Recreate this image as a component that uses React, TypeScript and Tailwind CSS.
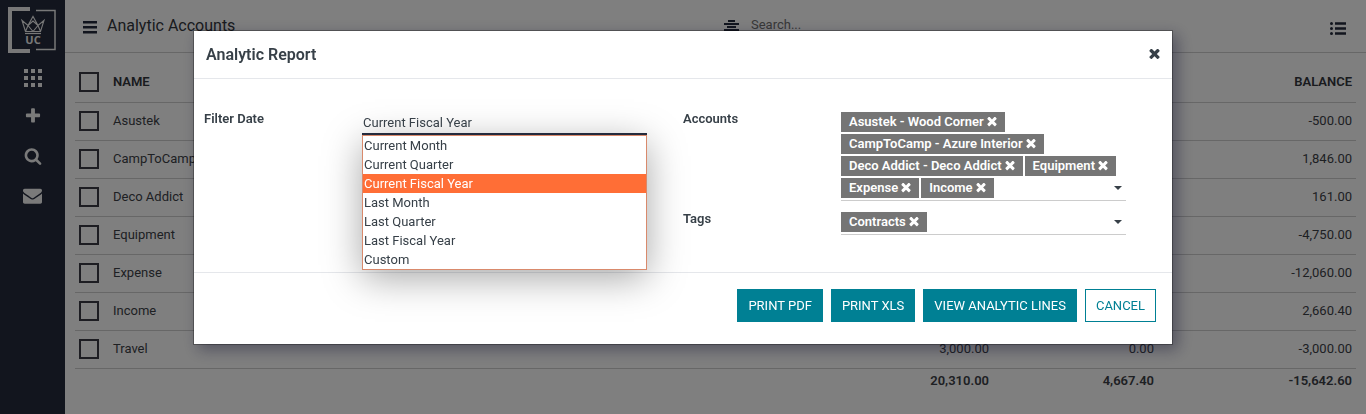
import React from "react";

type IconProps = { d: string; className?: string; viewBox?: string };

function Icon({ d, className, viewBox = "0 0 1792 1792" }: IconProps) {
  return (
    <svg viewBox={viewBox} className={className} fill="currentColor" aria-hidden="true">
      <path d={d} />
    </svg>
  );
}

const TIMES =
  "M1490 1322q0 40-28 68l-136 136q-28 28-68 28t-68-28l-294-294-294 294q-28 28-68 28t-68-28l-136-136q-28-28-28-68t28-68l294-294-294-294q-28-28-28-68t28-68l136-136q28-28 68-28t68 28l294 294 294-294q28-28 68-28t68 28l136 136q28 28 28 68t-28 68l-294 294 294 294q28 28 28 68z";
const SEARCH =
  "M1216 832q0-185-131.5-316.5t-316.5-131.5-316.5 131.5-131.5 316.5 131.5 316.5 316.5 131.5 316.5-131.5 131.5-316.5zm512 832q0 52-38 90t-90 38q-54 0-90-38l-343-342q-179 124-399 124-143 0-273.5-55.5t-225-150-150-225-55.5-273.5 55.5-273.5 150-225 225-150 273.5-55.5 273.5 55.5 225 150 150 225 55.5 273.5q0 220-124 399l343 343q37 37 37 90z";
const PLUS =
  "M1600 736v192q0 40-28 68t-68 28h-416v416q0 40-28 68t-68 28h-192q-40 0-68-28t-28-68v-416h-416q-40 0-68-28t-28-68v-192q0-40 28-68t68-28h416v-416q0-40 28-68t68-28h192q40 0 68 28t28 68v416h416q40 0 68 28t28 68z";
const ENVELOPE =
  "M1792 710v794q0 66-47 113t-113 47h-1472q-66 0-113-47t-47-113v-794q44 49 101 87 362 246 497 345 57 42 92.5 65.5t94.5 48 110 24.5h2q51 0 110-24.5t94.5-48 92.5-65.5q170-123 498-345 57-39 100-87zm0-294q0 79-49 151t-122 123q-376 261-468 325-10 7-42.5 31t-54 38.5-52 32.5-57.5 27-50 9h-2q-23 0-50-9t-57.5-27-52-32.5-54-38.5-42.5-31q-91-64-262-182.5t-205-142.5q-62-42-117-115.5t-55-136.5q0-78 41.5-130t118.5-52h1472q65 0 112.5 47t47.5 113z";
const GRID = "M0 0h4v4h-4zM7 0h4v4h-4zM14 0h4v4h-4zM0 7h4v4h-4zM7 7h4v4h-4zM14 7h4v4h-4zM0 14h4v4h-4zM7 14h4v4h-4zM14 14h4v4h-4z";

function Logo() {
  return (
    <svg viewBox="0 0 50 48" className="h-12 w-[50px] text-[#f0f0f0]" role="img" aria-label="UC">
      <path d="M0 0h22v4H4v38h18v4H0z" fill="currentColor" />
      <path d="M28 3.500h19v39H28" fill="none" stroke="currentColor" strokeWidth="1.500" />
      <path
        d="M17.500 24.500 14 13.500l6 5 5-9 5 9 6-5-3.500 11zM17.500 24.500l2.500-6 5 6 5-6 2.500 6M20 18.500 25 14l5 4.500"
        fill="none"
        stroke="currentColor"
        strokeWidth="1.100"
      />
      <path d="M17 26.500h16" stroke="currentColor" strokeWidth="1.200" />
      <text x="25" y="37" textAnchor="middle" fontSize="11" fontWeight="700" fontFamily="Open Sans, sans-serif" fill="currentColor">
        UC
      </text>
    </svg>
  );
}

function Sidebar() {
  return (
    <nav className="flex w-[65px] shrink-0 flex-col items-center bg-[#242b3d] text-[#f4f4f4]">
      <a href="#home" className="mt-[7px] block">
        <Logo />
      </a>
      <button type="button" aria-label="Apps" className="mt-[14px]">
        <Icon d={GRID} viewBox="0 0 18 18" className="h-[18px] w-[18px]" />
      </button>
      <button type="button" aria-label="Create" className="mt-5">
        <Icon d={PLUS} className="h-[18px] w-[18px]" />
      </button>
      <button type="button" aria-label="Search" className="mt-[22px]">
        <Icon d={SEARCH} className="h-[18px] w-[18px]" />
      </button>
      <button type="button" aria-label="Messages" className="mt-[21px]">
        <Icon d={ENVELOPE} className="h-[19px] w-[19px]" />
      </button>
    </nav>
  );
}

type Row = { name: string; debit?: string; credit?: string; balance: string };

const rows: Row[] = [
  { name: "Asustek", balance: "-500.00" },
  { name: "CampToCamp", balance: "1,846.00" },
  { name: "Deco Addict", balance: "161.00" },
  { name: "Equipment", balance: "-4,750.00" },
  { name: "Expense", balance: "-12,060.00" },
  { name: "Income", balance: "2,660.40" },
  { name: "Travel", debit: "3,000.00", credit: "0.00", balance: "-3,000.00" },
];

function Check({ label }: { label: string }) {
  return (
    <input
      type="checkbox"
      aria-label={label}
      className="ml-1 block h-5 w-5 appearance-none border-2 border-[#3a3a44]"
    />
  );
}

function AccountsTable() {
  return (
    <table className="w-full table-fixed border-collapse text-[13px] text-[#3c4147]">
      <colgroup>
        <col className="w-[34px]" />
        <col />
        <col className="w-[200px]" />
        <col className="w-[165px]" />
        <col className="w-[198px]" />
      </colgroup>
      <thead>
        <tr className="h-[39px] border-b border-[#cfcfcf] text-[#33363c]">
          <th className="p-0 font-normal"><Check label="Select all" /></th>
          <th className="px-1 pb-[2px] text-left font-semibold">NAME</th>
          <td />
          <td />
          <th className="px-1 pb-[2px] text-right font-semibold">BALANCE</th>
        </tr>
      </thead>
      <tbody>
        {rows.map((r) => (
          <tr key={r.name} className="h-[38px] border-b border-[#cfcfcf]">
            <td className="p-0"><Check label={r.name} /></td>
            <td className="px-1">{r.name}</td>
            <td className="px-1 text-right">{r.debit}</td>
            <td className="px-1 text-right">{r.credit}</td>
            <td className="px-1 text-right">{r.balance}</td>
          </tr>
        ))}
      </tbody>
      <tfoot>
        <tr className="h-6 font-semibold">
          <td />
          <td />
          <td className="px-1 text-right">20,310.00</td>
          <td className="px-1 text-right">4,667.40</td>
          <td className="px-1 text-right">-15,642.60</td>
        </tr>
      </tfoot>
    </table>
  );
}

function TopBar() {
  return (
    <header className="flex h-[53px] items-center border-b border-[#cfcfcf] text-[#33363c]">
      <div className="flex flex-1 items-center gap-[10px] pl-[18px]">
        <button type="button" aria-label="Menu" className="pt-[2px] text-[#242b3d]">
          <Icon
            d="M0 0h14v2.400H0zM0 5h14v2.400H0zM0 10h14v2.400H0z"
            viewBox="0 0 14 13"
            className="h-[13px] w-[14px]"
          />
        </button>
        <h1 className="text-base">Analytic Accounts</h1>
      </div>
      <div className="flex flex-1 items-center gap-3 pb-[3px] pl-[35px]">
        <Icon
          d="M4 1h7v2H4zM0 4h15v2H0zM3 7h9v2H3zM0 10h15v2H0z"
          viewBox="0 0 15 12"
          className="h-3 w-[15px] text-[#242b3d]"
        />
        <input aria-label="Search" placeholder="Search..." className="w-60 bg-transparent text-[13px] placeholder:text-[#707070]" />
      </div>
      <button type="button" aria-label="List view" className="mr-5 pt-1 text-[#242b3d]">
        <Icon
          d="M0 1.500a1.500 1.500 0 1 0 3 0a1.500 1.500 0 1 0-3 0zM5 0.300h11v2.400H5zM0 6.500a1.500 1.500 0 1 0 3 0a1.500 1.500 0 1 0-3 0zM5 5.300h11v2.400H5zM0 11.500a1.500 1.500 0 1 0 3 0a1.500 1.500 0 1 0-3 0zM5 10.300h11v2.400H5z"
          viewBox="0 0 16 13"
          className="h-[13px] w-4"
        />
      </button>
    </header>
  );
}

function Tag({ children }: { children: string }) {
  return (
    <span className="flex h-5 items-center gap-[3px] bg-[#757575] px-2 text-[13px] font-semibold text-white">
      {children}
      <button type="button" aria-label={`Remove ${children}`}>
        <Icon d={TIMES} viewBox="256 384 1280 1280" className="h-[10px] w-[10px]" />
      </button>
    </span>
  );
}

function TagField({ label, tags }: { label: string; tags: string[] }) {
  return (
    <div className="flex items-start">
      <span className="w-[158px] shrink-0 text-[13px] leading-5 font-semibold">{label}</span>
      <div
        role="group"
        aria-label={label}
        className="relative mt-[3px] flex w-[285px] flex-wrap gap-[2px] border-b border-[#ccc] pb-[2px]"
      >
        {tags.map((t) => (
          <Tag key={t}>{t}</Tag>
        ))}
        <button type="button" aria-label={`Choose ${label}`} className="absolute right-1 bottom-[10px]">
          <Icon d="M0 0h8L4 4z" viewBox="0 0 8 4" className="h-1 w-2" />
        </button>
      </div>
    </div>
  );
}

const periods = [
  "Current Month",
  "Current Quarter",
  "Current Fiscal Year",
  "Last Month",
  "Last Quarter",
  "Last Fiscal Year",
  "Custom",
];

function DateField() {
  const selected = "Current Fiscal Year";
  return (
    <div className="flex items-start">
      <label htmlFor="filter-date" className="w-[158px] shrink-0 text-[13px] leading-5 font-semibold">
        Filter Date
      </label>
      <div className="relative w-[285px]">
        <ul
          role="listbox"
          aria-label="Filter Date"
          className="absolute top-full left-0 w-full border border-[#d98a6c] bg-white text-[13px] leading-[19px] shadow-[0_8px_36px_rgba(0,0,0,0.35)]"
        >
          {periods.map((p) => (
            <li
              key={p}
              role="option"
              aria-selected={p === selected}
              className={p === selected ? "bg-[#ff6e36] px-px text-white" : "px-px"}
            >
              {p}
            </li>
          ))}
        </ul>
        <select
          id="filter-date"
          defaultValue={selected}
          className="relative block h-[26px] w-full appearance-none border-b-2 border-[#242b3d] bg-transparent px-px pt-1 text-[13px] outline-none"
        >
          <option>{selected}</option>
        </select>
      </div>
    </div>
  );
}

const primary = "h-[33px] border border-[#008094] bg-[#008094] px-[10px] text-white";

function ReportDialog() {
  return (
    <div
      role="dialog"
      aria-labelledby="report-title"
      className="mt-[30px] w-full max-w-[980px] self-start border border-black/30 bg-white bg-clip-padding text-[#374048] shadow-[5px_5px_14px_rgba(20,20,50,0.4)]"
    >
      <div className="flex h-12 items-center justify-between border-b border-[#e5e7eb] px-3">
        <h2 id="report-title" className="text-base font-semibold">Analytic Report</h2>
        <button type="button" aria-label="Close">
          <Icon d={TIMES} viewBox="256 384 1280 1280" className="h-[11px] w-[11px]" />
        </button>
      </div>
      <div className="grid grid-cols-2 px-[10px] pt-[30px] pb-[37px]">
        <DateField />
        <div className="flex flex-col gap-2">
          <TagField
            label="Accounts"
            tags={[
              "Asustek - Wood Corner",
              "CampToCamp - Azure Interior",
              "Deco Addict - Deco Addict",
              "Equipment",
              "Expense",
              "Income",
            ]}
          />
          <TagField label="Tags" tags={["Contracts"]} />
        </div>
      </div>
      <div className="flex justify-end gap-2 border-t border-[#e5e7eb] px-4 pt-4 pb-[22px] text-[13px]">
        <button type="button" className={primary}>PRINT PDF</button>
        <button type="button" className={primary}>PRINT XLS</button>
        <button type="button" className={primary}>VIEW ANALYTIC LINES</button>
        <button type="button" className="h-[33px] border border-[#008094] bg-white px-[10px] text-[#008094]">
          CANCEL
        </button>
      </div>
    </div>
  );
}

export default function App() {
  return (
    <div className="flex min-h-screen bg-white font-[Roboto,sans-serif]">
      <Sidebar />
      <main className="min-w-0 flex-1">
        <TopBar />
        <div className="px-[10px] pt-[10px]">
          <AccountsTable />
        </div>
      </main>
      <div className="fixed inset-0 flex justify-center bg-black/50">
        <ReportDialog />
      </div>
    </div>
  );
}
